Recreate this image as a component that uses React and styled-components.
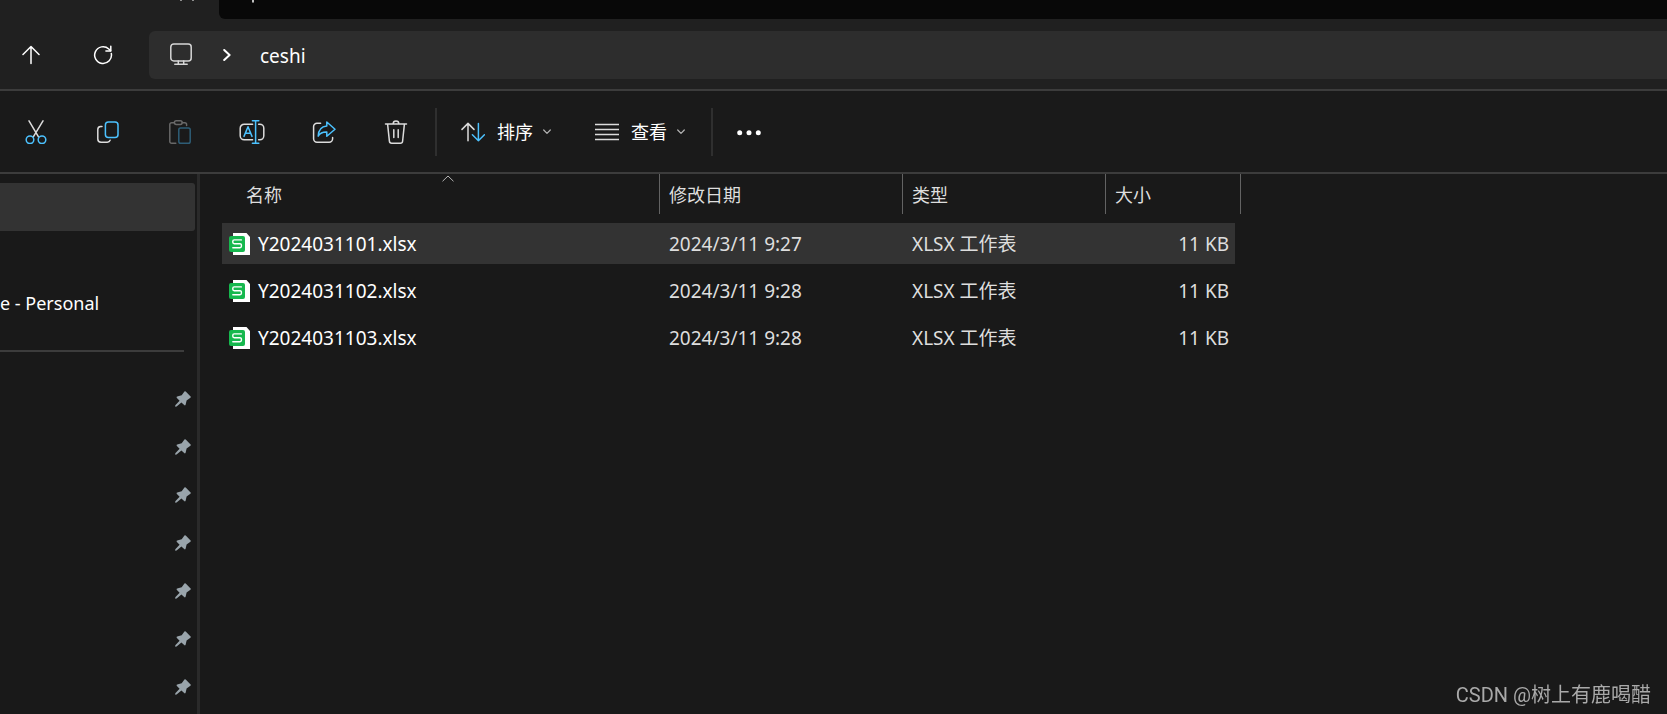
import styled, { createGlobalStyle } from "styled-components"

const GlobalStyle = createGlobalStyle`
  * {
    box-sizing: border-box;
  }
  body {
    margin: 0;
    background-color: #191919;
    color: #ffffff;
    font-family: "Noto Sans", "Noto Sans CJK SC", sans-serif;
    font-size: 19px;
  }
  button {
    font: inherit;
    color: inherit;
    background: none;
    border: none;
    padding: 0;
    cursor: pointer;
  }
  svg {
    display: block;
    flex: none;
  }
`

const Window = styled.div`
  min-height: 100vh;
  display: flex;
  flex-direction: column;
  overflow: hidden;
`

const TabStrip = styled.div`
  display: flex;
  height: 19px;
  background-color: #202020;
`

const Tab = styled.div`
  width: 219px;
  display: flex;
  align-items: flex-start;
  justify-content: flex-end;
  padding-right: 25px;
`

const TabRest = styled.div`
  flex: 1;
  display: flex;
  align-items: flex-start;
  padding-left: 27px;
  background-color: #080808;
  border-bottom-left-radius: 6px;
`

const NavBar = styled.div`
  display: flex;
  align-items: center;
  padding: 12px 0 10px;
  background-color: #202020;
  border-bottom: 2px solid #3c3c3c;
`

const NavButton = styled.button`
  width: 72px;
  height: 48px;
  display: flex;
  align-items: center;
  justify-content: center;

  &:first-child {
    width: 62px;
  }
  &:nth-child(2) {
    width: 82px;
    margin-right: 5px;
  }
`

const AddressBar = styled.nav`
  flex: 1;
  height: 48px;
  display: flex;
  align-items: center;
  padding-left: 20px;
  background-color: #2d2d2d;
  border-radius: 6px 0 0 6px;
`

const Crumb = styled.a`
  padding-top: 2px;
  color: #ffffff;
  text-decoration: none;
  line-height: 24px;
`

const CrumbArrow = styled.span`
  margin: 0 29px 0 30px;
`

const Toolbar = styled.div`
  height: 83px;
  display: flex;
  align-items: center;
  border-bottom: 2px solid #3c3c3c;
  background-color: #1a1a1a;
`

const IconButton = styled.button`
  width: 72px;
  height: 48px;
  display: flex;
  align-items: center;
  justify-content: center;
  opacity: ${(props) => (props.disabled ? 0.4 : 1)};
`

const MenuButton = styled.button`
  height: 48px;
  display: flex;
  align-items: center;
  padding: 0 20px 0 24px;
  font-size: 18px;
  line-height: 24px;
`

const MenuLabel = styled.span`
  margin: 0 10px 0 12px;
`

const Divider = styled.span`
  width: 2px;
  height: 48px;
  margin-left: ${(props) => props.$gap}px;
  background-color: #2f2f2f;
`

const Body = styled.div`
  flex: 1;
  display: flex;
`

const Sidebar = styled.aside`
  width: 200px;
  padding-top: 9px;
  border-right: 3px solid #2a2a2a;
`

const SideItem = styled.div`
  height: 48px;
  margin-right: 2px;
  display: flex;
  align-items: center;
  justify-content: ${(props) => (props.$pinned ? "flex-end" : "flex-start")};
  padding-right: 4px;
  font-size: 18px;
  white-space: nowrap;
  border-radius: 0 3px 3px 0;
  background-color: ${(props) => (props.$selected ? "#333333" : "transparent")};
`

const SideLine = styled.hr`
  height: 2px;
  margin: 23px 13px 23px 0;
  border: none;
  background-color: #3c3c3c;
`

const Main = styled.main`
  flex: 1;
  padding-left: 22px;
`

const FileTable = styled.table`
  table-layout: fixed;
  width: 1019px;
  border-collapse: separate;
  border-spacing: 0;
`

const HeadCell = styled.th`
  width: ${(props) => props.$width}px;
  padding: 0 0 9px ${(props) => (props.$first ? 15 : 0)}px;
  font-weight: 400;
`

const SortButton = styled.button`
  position: relative;
  display: block;
  width: 100%;
  height: 40px;
  padding: 2px 0 0 9px;
  text-align: left;
  font-size: 18px;
  line-height: 24px;
  color: #dedede;
  border-right: 1px solid #636363;
`

// sort direction mark, floats above the column title
const SortMark = styled.span`
  position: absolute;
  top: 1px;
  left: 50%;
  transform: translateX(-50%);
`

const Row = styled.tr`
  td {
    background-color: ${(props) => (props.$selected ? "#333333" : "transparent")};
  }
`

const Cell = styled.td`
  height: 47px;
  padding: 1px 0 0 9px;
  line-height: 24px;
  color: #dedede;
  border-bottom: 6px solid transparent;
  background-clip: padding-box;
  white-space: nowrap;
`

const NameCell = styled(Cell)`
  padding-left: 7px;
  color: #ffffff;
`

const SizeCell = styled(Cell)`
  padding-right: 6px;
  text-align: right;
  border-right: 6px solid transparent;
`

const FileName = styled.div`
  display: flex;
  align-items: center;
  gap: 7px;
`

const Watermark = styled.div`
  position: fixed;
  right: 16px;
  bottom: 7px;
  font-family: Roboto, "Noto Sans CJK SC", sans-serif;
  font-size: 20px;
  line-height: 24px;
  color: #a9a9a9;
`

const Svg = ({ w = 24, h = 24, children, ...rest }) => (
  <svg
    width={w}
    height={h}
    viewBox={`0 0 ${w} ${h}`}
    fill="none"
    stroke="#dcdcdc"
    strokeWidth="1.5"
    strokeLinecap="round"
    strokeLinejoin="round"
    aria-hidden="true"
    {...rest}
  >
    {children}
  </svg>
)

const BLUE = "#4cc2ff"

const UpIcon = () => (
  <Svg w={18} h={20} stroke="#ffffff">
    <path d="M9 18.5V1.5M1 9.5L9 1.5l8 8" />
  </Svg>
)

const RefreshIcon = () => (
  <Svg w={20} h={20} stroke="#ffffff">
    <path d="M18.3 8.5A8.4 8.4 0 1 1 15.8 4L17.6 5.8" />
    <path d="M17.8 1.2V6h-4.9" />
  </Svg>
)

const MonitorIcon = () => (
  <Svg w={24} h={24} stroke="#d6d6d6">
    <rect x="1.8" y=".9" width="20.4" height="17" rx="3" />
    <path d="M9.3 18v3.3M14.7 18v3.3M5.8 21.3h12.4" />
  </Svg>
)

const CutIcon = () => (
  <Svg>
    <path d="M5 .8l9.5 16M19 .8L9.3 16.8" />
    <circle cx="6" cy="19.7" r="3.8" stroke={BLUE} />
    <circle cx="18" cy="19.7" r="3.8" stroke={BLUE} />
  </Svg>
)

const CopyIcon = () => (
  <Svg>
    <path d="M6 6.4H4.6A3 3 0 0 0 1.8 9.4V19a3.2 3.2 0 0 0 3.2 3.2h6.3a3 3 0 0 0 2.8-2" />
    <rect x="9.4" y="2" width="12.6" height="15.6" rx="3" stroke={BLUE} />
  </Svg>
)

const PasteIcon = () => (
  <Svg>
    <path d="M6.2 2.8H3.6a1.8 1.8 0 0 0-1.8 1.8v16.8a1.8 1.8 0 0 0 1.8 1.8h4.2M14.2 2.8h2.6a1.8 1.8 0 0 1 1.8 1.8v1" />
    <rect x="6.4" y=".8" width="7.8" height="3.6" rx="1.8" />
    <rect x="10.8" y="8" width="11.4" height="15.2" rx="1.8" stroke={BLUE} />
  </Svg>
)

const RenameIcon = () => (
  <Svg w={26} h={26}>
    <path d="M13.6 5.2H5.2a4 4 0 0 0-4 4v7.6a4 4 0 0 0 4 4h8.4M19.6 5.2h1.2a4 4 0 0 1 4 4v7.6a4 4 0 0 1-4 4h-1.2" />
    <path d="M5 17.4l4-9.6 4 9.6M6.4 14.2h5.2M16.6 2v22M13.4 1.8h6.4M13.4 24.2h6.4" stroke={BLUE} />
  </Svg>
)

const ShareIcon = () => (
  <Svg>
    <path d="M8.6 3.2H5a3.4 3.4 0 0 0-3.4 3.4v12.2a3.4 3.4 0 0 0 3.4 3.4h12.2a3.4 3.4 0 0 0 3.4-3.4v-1.4" />
    <path d="M14.8 2L23 9.3l-8.2 7v-4.2c-4-.2-6.6 1-8.6 4.1.2-6 3.4-9.6 8.6-10.1z" stroke={BLUE} />
  </Svg>
)

const TrashIcon = () => (
  <Svg>
    <path d="M1.5 3.9h21M3.6 4.1l1.8 17.1a2.2 2.2 0 0 0 2.2 2h8.8a2.2 2.2 0 0 0 2.2-2l1.8-17.1M9.2 3.6a2.8 2.6 0 0 1 5.6 0M9.8 9.8v7.8M14.2 9.8v7.8" />
  </Svg>
)

const SortIcon = () => (
  <Svg>
    <path d="M7 20.8V3.4M1 9.4l6-6 6 6" />
    <path d="M17.4 3.4v17.4M11.4 14.8l6 6 6-6" stroke={BLUE} />
  </Svg>
)

const ListIcon = () => (
  <Svg strokeLinecap="butt">
    <path d="M0 4.4h24M0 9.4h24M0 14.4h24M0 19.4h24" />
  </Svg>
)

const ChevronDown = () => (
  <Svg w={8} h={6} stroke="#b4b4b4" strokeWidth="1.2">
    <path d="M.7 1L4 4.4 7.3 1" />
  </Svg>
)

const MoreIcon = () => (
  <Svg fill="#ffffff" stroke="none">
    <circle cx="2.7" cy="12.7" r="2.5" />
    <circle cx="12" cy="12.7" r="2.5" />
    <circle cx="21.3" cy="12.7" r="2.5" />
  </Svg>
)

const PinIcon = () => (
  <Svg w={16} h={16} fill="#99a4ab" stroke="none">
    <path d="M9.4.4q.7-.5 1.3.1l4.9 4.9q.6.7-.2 1.3L11.6 9.5l-1 4.3q-.5 1.1-1.4.3L6.4 11.4 1.6 15.6.2 15.8l.1-1.5L4.6 9.8 1.9 7.1q-.8-1 .3-1.5l4.5-1.3z" />
  </Svg>
)

const SheetIcon = () => (
  <Svg w={22} h={24} stroke="none">
    <path d="M4 1h13.5l3.5 4v18H4z" fill="#ffffff" />
    <rect y="4" width="16" height="16" rx="2" fill="#16b84e" />
    <path
      d="M12.4 7.9H5.2A1.4 1.4 0 0 0 3.8 9.3v1a1.4 1.4 0 0 0 1.4 1.4H11a1.4 1.4 0 0 1 1.4 1.4v1.2a1.4 1.4 0 0 1-1.4 1.4H3.8"
      stroke="#ffffff"
      strokeWidth="1.4"
    />
  </Svg>
)

const tools = [
  { label: "剪切", Icon: CutIcon },
  { label: "复制", Icon: CopyIcon },
  { label: "粘贴", Icon: PasteIcon, disabled: true },
  { label: "重命名", Icon: RenameIcon },
  { label: "共享", Icon: ShareIcon },
  { label: "删除", Icon: TrashIcon },
]

const columns = [
  { title: "名称", width: 438, sorted: true },
  { title: "修改日期", width: 243 },
  { title: "类型", width: 203 },
  { title: "大小", width: 135 },
]

const files = [
  { name: "Y2024031101.xlsx", date: "2024/3/11 9:27", selected: true },
  { name: "Y2024031102.xlsx", date: "2024/3/11 9:28" },
  { name: "Y2024031103.xlsx", date: "2024/3/11 9:28" },
]

const pins = [1, 2, 3, 4, 5, 6, 7]

const App = () => {
  return (
    <Window>
      <GlobalStyle />
      <TabStrip>
        <Tab>
          <button aria-label="关闭标签页">
            <Svg w={14} h={2}>
              <path d="M2.5-2L1 .2M11.5-2L13 .2" />
            </Svg>
          </button>
        </Tab>
        <TabRest>
          <button aria-label="新建标签页">
            <Svg w={14} h={3} stroke="#ffffff">
              <path d="M7-4v6" />
            </Svg>
          </button>
        </TabRest>
      </TabStrip>

      <NavBar>
        <NavButton aria-label="上移">
          <UpIcon />
        </NavButton>
        <NavButton aria-label="刷新">
          <RefreshIcon />
        </NavButton>
        <AddressBar>
          <MonitorIcon />
          <CrumbArrow>
            <Svg w={8} h={12} stroke="#ffffff" strokeWidth="2">
              <path d="M1.2 1L6.6 6l-5.4 5" />
            </Svg>
          </CrumbArrow>
          <Crumb href="#ceshi">ceshi</Crumb>
        </AddressBar>
      </NavBar>

      <Toolbar>
        {tools.map(({ label, Icon, disabled }) => (
          <IconButton key={label} aria-label={label} disabled={disabled}>
            <Icon />
          </IconButton>
        ))}
        <Divider $gap={3} />
        <MenuButton>
          <SortIcon />
          <MenuLabel>排序</MenuLabel>
          <ChevronDown />
        </MenuButton>
        <MenuButton>
          <ListIcon />
          <MenuLabel>查看</MenuLabel>
          <ChevronDown />
        </MenuButton>
        <Divider $gap={6} />
        <IconButton aria-label="更多">
          <MoreIcon />
        </IconButton>
      </Toolbar>

      <Body>
        <Sidebar>
          <SideItem $selected />
          <SideItem />
          <SideItem>e - Personal</SideItem>
          <SideLine />
          {/* quick access entries, only the pins are in view */}
          {pins.map((pin) => (
            <SideItem key={pin} $pinned>
              <PinIcon />
            </SideItem>
          ))}
        </Sidebar>
        <Main>
          <FileTable>
            <thead>
              <tr>
                {columns.map(({ title, width, sorted }) => (
                  <HeadCell key={title} $width={width} $first={sorted}>
                    <SortButton>
                      {title}
                      {sorted && (
                        <SortMark>
                          <Svg w={12} h={7} stroke="#b4b4b4" strokeWidth="1">
                            <path d="M.8 6L6 1l5.2 5" />
                          </Svg>
                        </SortMark>
                      )}
                    </SortButton>
                  </HeadCell>
                ))}
              </tr>
            </thead>
            <tbody>
              {files.map(({ name, date, selected }) => (
                <Row key={name} $selected={selected}>
                  <NameCell>
                    <FileName>
                      <SheetIcon />
                      {name}
                    </FileName>
                  </NameCell>
                  <Cell>{date}</Cell>
                  <Cell>XLSX 工作表</Cell>
                  <SizeCell>11 KB</SizeCell>
                </Row>
              ))}
            </tbody>
          </FileTable>
        </Main>
      </Body>
      <Watermark>CSDN @树上有鹿喝醋</Watermark>
    </Window>
  )
}

export default App
